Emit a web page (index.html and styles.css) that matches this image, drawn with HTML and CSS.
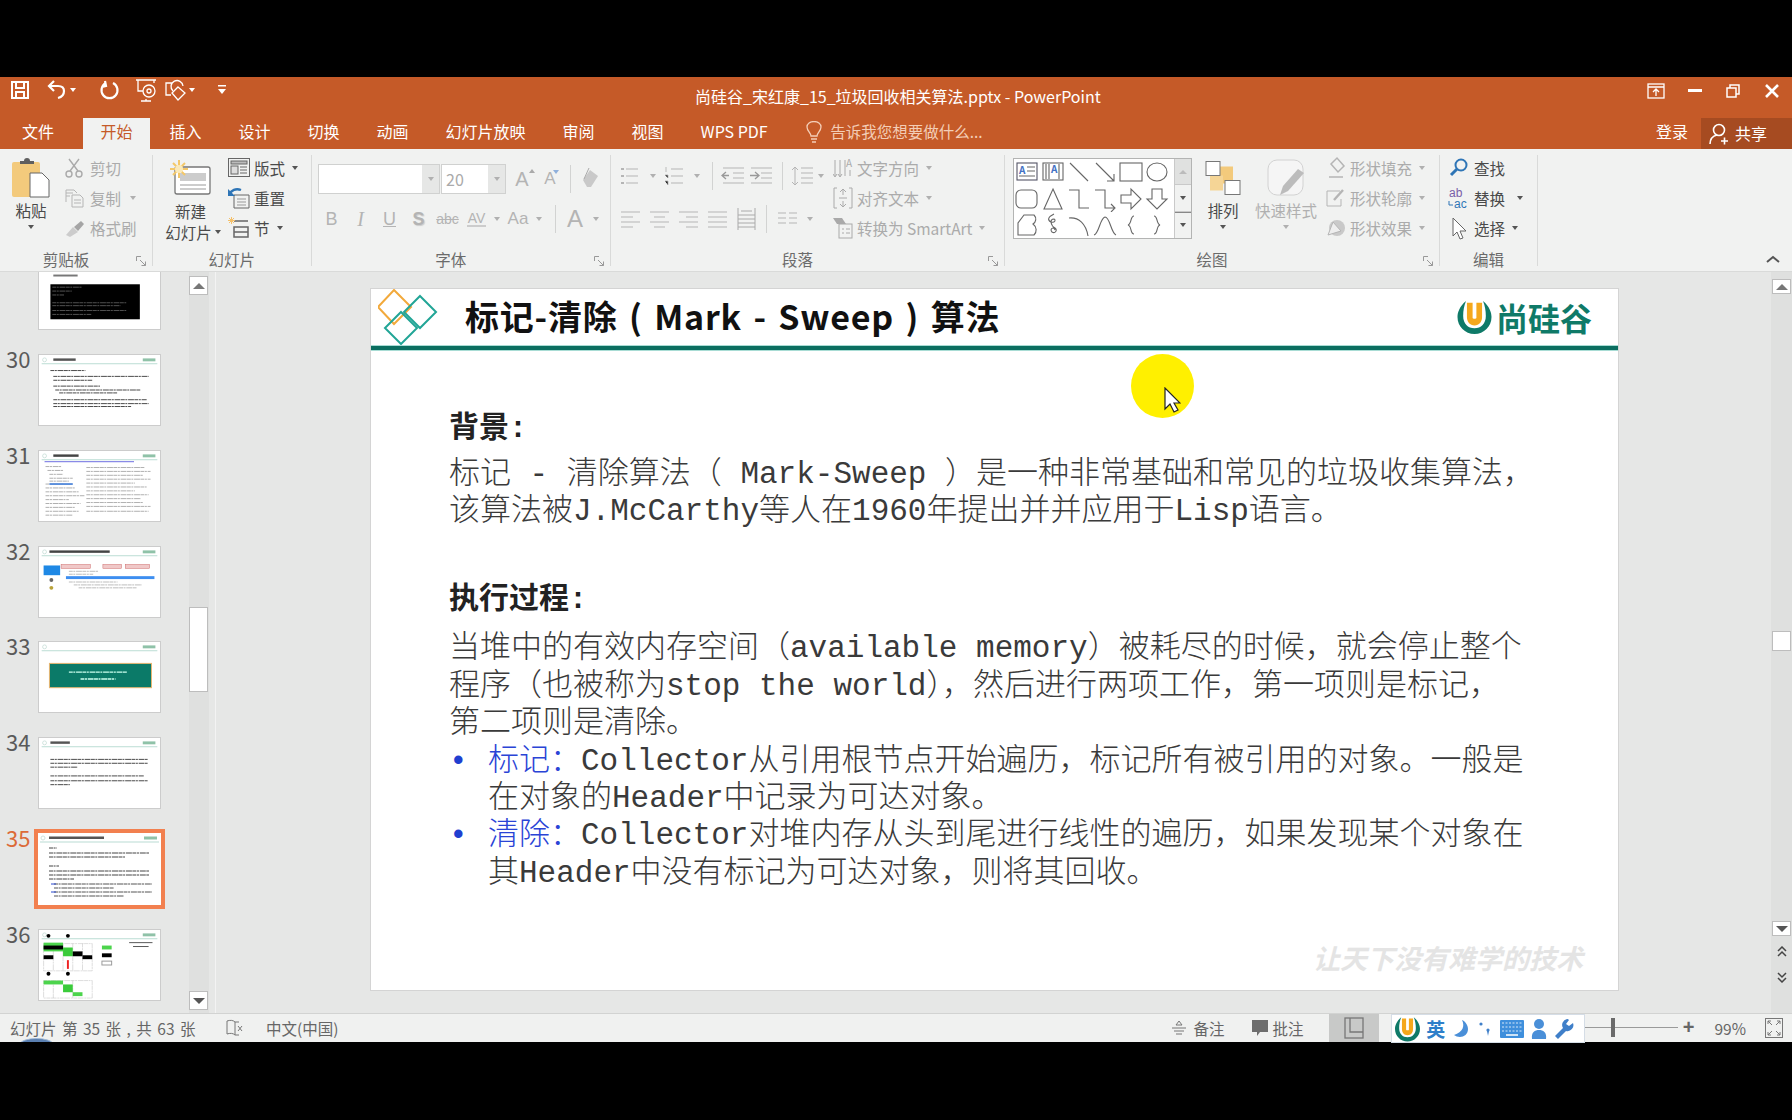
FILE: index.html
```html
<!DOCTYPE html>
<html>

<head>
    <meta charset="UTF-8" />
    <title>尚硅谷_宋红康_15_垃圾回收相关算法.pptx - PowerPoint</title>
    <link rel="stylesheet" href="styles.css">
</head>

<body>
    <svg class="defs" width="0" height="0">
        <symbol id="ulogo" viewBox="0 0 36 36">
            <path d="M9 1C2 7 0 13 0 18c0 10 8 18 18 18s18-8 18-18c0-5-2-11-9-17 2 5 3 10 3 16 0 8-5 13-12 13S6 25 6 17C6 11 7 6 9 1z" fill="#0f7a68" />
            <path d="M10 3h16v15c0 5-3 9-8 9s-8-4-8-9z" fill="#f5a81c" />
            <path d="M16 1h4v18c0 1-4 1-4 0z" fill="#fff" />
        </symbol>
        <symbol id="thead" viewBox="0 0 123 72">
            <rect x="2" y="8.500" width="119" height="1" fill="#b9dcd3" />
            <circle cx="5" cy="5" r="2" fill="none" stroke="#cfe3dd" />
            <rect x="106" y="3.500" width="13" height="3" fill="#8fc2a8" />
        </symbol>
        <symbol id="launch" viewBox="0 0 10 10">
            <path d="M.5 5V.5H5M9.500 9.500L4 4M9.500 5.500v4h-4" fill="none" stroke="#999" />
        </symbol>
    </svg>

    <div class="bar-black top"></div>

    <div class="titlebar">
        <div class="qat">
            <svg class="q-save" width="22" height="22" viewBox="0 0 22 22" fill="none" stroke="#fff" stroke-width="2"><path d="M3 3h16v16H3zM7 3v6h8V3M7 19v-6h8v6" /></svg>
            <svg class="q-undo" width="22" height="22" viewBox="0 0 22 22" fill="none" stroke="#fff" stroke-width="2.200"><path d="M8 2L3 7l5 5M3 7h9c4 0 6 2 6 5s-2 6-6 7" /></svg>
            <i class="caret white"></i>
            <svg class="q-redo" width="22" height="22" viewBox="0 0 22 22" fill="none" stroke="#fff" stroke-width="2.200"><path d="M14 4a8 8 0 1 1-7 0M6 2l1 5-4 1" /></svg>
            <svg class="q-show" width="22" height="24" viewBox="0 0 22 24" fill="none" stroke="#fff" stroke-width="1.300"><path d="M1 2h20M3 2v11h5M19 2v3M11 21v2M6 23h10" /><circle cx="14" cy="13" r="6" /><circle cx="14" cy="13" r="2" /></svg>
            <svg class="q-shape" width="22" height="22" viewBox="0 0 22 22" fill="none" stroke="#fff" stroke-width="1.300"><path d="M7 4H1v12h5M8 12a6 6 0 1 1 10-5" /><path d="M13 8l7 6-7 7-6-7z" /></svg>
            <i class="caret white"></i>
            <svg class="q-more" width="10" height="12" viewBox="0 0 10 12" fill="#fff"><rect x="1" y="1" width="8" height="1.500" /><path d="M1 5h8L5 10z" /></svg>
        </div>
        <div class="doc-title">尚硅谷_宋红康_15_垃圾回收相关算法.pptx - PowerPoint</div>
        <div class="winctl">
            <span><svg width="18" height="16" viewBox="0 0 18 16" fill="none" stroke="#fff" stroke-width="1.300"><rect x="1" y="1" width="16" height="14" /><path d="M1 4h16M9 13V7M6 9l3-3 3 3" /></svg></span>
            <span><svg width="14" height="4" viewBox="0 0 14 4"><rect width="14" height="3" fill="#fff" /></svg></span>
            <span><svg width="14" height="14" viewBox="0 0 14 14" fill="none" stroke="#fff" stroke-width="1.500"><rect x="1" y="4" width="9" height="9" /><path d="M4 4V1h9v9h-3" /></svg></span>
            <span><svg width="14" height="14" viewBox="0 0 14 14" stroke="#fff" stroke-width="2.600"><path d="M1 1l12 12M13 1L1 13" /></svg></span>
        </div>
    </div>

    <div class="tabs">
        <a class="tab first">文件</a>
        <a class="tab active">开始</a>
        <a class="tab">插入</a>
        <a class="tab">设计</a>
        <a class="tab">切换</a>
        <a class="tab">动画</a>
        <a class="tab">幻灯片放映</a>
        <a class="tab">审阅</a>
        <a class="tab">视图</a>
        <a class="tab">WPS PDF</a>
        <div class="tell">
            <svg width="16" height="22" viewBox="0 0 16 22" fill="none" stroke="#f3cdb6" stroke-width="1.300"><path d="M5 15c0-3-4-5-4-9a7 5.500 0 0 1 14 0c0 4-4 6-4 9zM5 18h6M6 21h4" /></svg>
            <span>告诉我您想要做什么...</span>
        </div>
        <div class="account">
            <span class="login">登录</span>
            <div class="share">
                <svg width="20" height="24" viewBox="0 0 20 24" fill="none" stroke="#fff" stroke-width="1.600"><circle cx="10" cy="8" r="5.500" /><path d="M1 22c0-5 3-8 7-9M12 19h7M15.500 15.500v7" /></svg>
                <span>共享</span>
            </div>
        </div>
    </div>

    <div class="ribbon">
        <!-- 剪贴板 -->
        <div class="group g-clip">
            <div class="body">
                <div class="big w62">
                    <svg width="38" height="40" viewBox="0 0 38 40">
                        <rect y="4" width="28" height="35" rx="2" fill="#f3ca7c" />
                        <path d="M8 6V3h4a3 3 0 0 1 6 0h4v3z" fill="#5f5f5f" />
                        <path d="M18 15h12l7 7v17H18z" fill="#fff" stroke="#666" />
                    </svg>
                    <span class="lbl dark">粘贴</span>
                    <i class="caret dk"></i>
                </div>
                <div class="stack">
                    <div class="tool"><svg width="24" height="20" viewBox="0 0 24 20" fill="none" stroke="#aaa" stroke-width="1.400"><circle cx="7" cy="16" r="3" /><circle cx="17" cy="16" r="3" /><path d="M8 13L17 1M16 13L7 1" /></svg><span>剪切</span></div>
                    <div class="tool"><svg width="24" height="20" viewBox="0 0 24 20" fill="none" stroke="#b5b5b5"><path d="M4 14V2h8l3 3M4 5h7M4 8h4" /><path d="M10 7h8l3 3v9H10zM12 12h7M12 15h7" /></svg><span>复制</span><i class="caret w16"></i></div>
                    <div class="tool"><svg width="24" height="20" viewBox="0 0 24 20"><path d="M4 17l7-8 5 5-8 5z" fill="#ccc" /><path d="M12 9l7-6 3 3-6 7z" fill="#a5a5a5" /></svg><span>格式刷</span></div>
                </div>
            </div>
            <div class="label">剪贴板</div>
            <svg class="launcher" width="10" height="10"><use href="#launch" /></svg>
        </div>

        <!-- 幻灯片 -->
        <div class="group g-slide">
            <div class="body">
                <div class="big w75">
                    <svg width="42" height="36" viewBox="0 0 42 36">
                        <rect x="5" y="7" width="35" height="27" rx="2" fill="#fff" stroke="#777" stroke-width="1.300" />
                        <rect x="10" y="13" width="26" height="8" fill="#ccc" />
                        <path d="M10 25h26M10 29h26" stroke="#999" />
                        <path d="M9 0v18M0 9h18M3 3l12 12M15 3L3 15" stroke="#f4c86a" stroke-width="2" />
                        <circle cx="9" cy="9" r="4" fill="#fbe9b8" />
                    </svg>
                    <span class="lbl dark two">新建</span>
                    <span class="lbl dark row">幻灯片<i class="caret dk w12"></i></span>
                </div>
                <div class="stack dark">
                    <div class="tool"><svg width="22" height="20" viewBox="0 0 22 20" fill="none" stroke="#666"><rect x=".5" y=".5" width="21" height="18" /><rect x="3" y="3" width="16" height="3" fill="#bbb" /><rect x="3" y="8" width="7" height="8" fill="#ddd" /><path d="M12 9h7M12 12h7M12 15h7" /></svg><span>版式</span><i class="caret dk"></i></div>
                    <div class="tool"><svg width="22" height="22" viewBox="0 0 22 22" fill="none"><path d="M6 8h15v13H6z" stroke="#666" /><path d="M9 12h9M9 15h9M9 18h9" stroke="#999" /><path d="M1 8C3 3 8 1 13 3" stroke="#2e75b6" stroke-width="2.400" /><path d="M0 2v7h7z" fill="#2e75b6" /></svg><span>重置</span></div>
                    <div class="tool"><svg width="22" height="22" viewBox="0 0 22 22" fill="none"><path d="M6 4h14M6 10h14v10H6zM6 15h14" stroke="#666" stroke-width="1.500" /><path d="M1 1l5 5M6 1L1 6M3.500 0v7M0 3.500h7" stroke="#f4c06a" /></svg><span>节</span><i class="caret dk"></i></div>
                </div>
            </div>
            <div class="label plain">幻灯片</div>
        </div>

        <!-- 字体 -->
        <div class="group g-font">
            <div class="font-row one">
                <div class="combo c-name"><i class="caret"></i></div>
                <div class="combo c-size"><span>20</span><i class="caret"></i></div>
                <span class="fx w32">A<sup class="up"></sup></span>
                <span class="fx w24 small">A<sup class="down"></sup></span>
                <i class="vsep s1"></i>
                <svg width="36" height="26" viewBox="0 0 36 26"><path d="M12 14l7-10 8 6-7 11h-4z" fill="#c9c9c9" /><path d="M13 13l5-11" stroke="#aaa" fill="none" /></svg>
            </div>
            <div class="font-row two">
                <b class="fmt">B</b>
                <i class="fmt ital">I</i>
                <u class="fmt">U</u>
                <span class="fmt shadow">S</span>
                <s class="fmt tiny">abc</s>
                <span class="fmt av">AV</span>
                <i class="caret w12"></i>
                <span class="fmt aa">Aa</span>
                <i class="caret w12"></i>
                <i class="vsep s2"></i>
                <span class="fx w30 mid">A</span>
                <i class="caret w12"></i>
            </div>
            <div class="label">字体</div>
            <svg class="launcher" width="10" height="10"><use href="#launch" /></svg>
        </div>

        <!-- 段落 -->
        <div class="group g-para">
            <div class="body">
                <div class="para-left">
                    <div class="para-row one">
                        <svg width="24" height="22" viewBox="0 0 24 22" stroke="#b5b5b5"><path d="M7 4h12M7 11h12M7 18h12" /><path d="M2 4h3M2 11h3M2 18h3" stroke-width="2" /></svg>
                        <i class="caret w20"></i>
                        <svg width="24" height="22" viewBox="0 0 24 22" stroke="#b5b5b5"><path d="M8 4h12M8 11h12M8 18h12" /><path d="M3 2v5M2 10h3v3M2 16h3v4" stroke-width=".9" /></svg>
                        <i class="caret w20"></i>
                        <i class="vsep s3"></i>
                        <svg width="30" height="22" viewBox="0 0 30 22" stroke="#b5b5b5" fill="none"><path d="M5 3h21M15 8h11M15 13h11M5 18h21" /><path d="M11 10.500H4M8 7l-4 3.500L8 14" stroke="#999" stroke-width="1.300" /></svg>
                        <svg width="28" height="22" viewBox="0 0 28 22" stroke="#b5b5b5" fill="none"><path d="M3 3h21M13 8h11M13 13h11M3 18h21" /><path d="M2 10.500h8M7 7l4 3.500L7 14" stroke="#999" stroke-width="1.300" /></svg>
                        <i class="vsep s4"></i>
                        <svg width="30" height="24" viewBox="0 0 30 24" stroke="#b5b5b5" fill="none"><path d="M13 4h12M13 9h12M13 14h12M13 19h12M7 3v18M4 6l3-3 3 3M4 18l3 3 3-3" /></svg>
                        <i class="caret w6"></i>
                    </div>
                    <div class="para-row two">
                        <svg width="29" height="22" viewBox="0 0 29 22" stroke="#b5b5b5"><path d="M5 4h19M5 9h12M5 14h19M5 19h12" /></svg>
                        <svg width="29" height="22" viewBox="0 0 29 22" stroke="#b5b5b5"><path d="M5 4h19M9 9h11M5 14h19M9 19h11" /></svg>
                        <svg width="29" height="22" viewBox="0 0 29 22" stroke="#b5b5b5"><path d="M5 4h19M12 9h12M5 14h19M12 19h12" /></svg>
                        <svg width="29" height="22" viewBox="0 0 29 22" stroke="#b5b5b5"><path d="M5 4h19M5 9h19M5 14h19M5 19h19" /></svg>
                        <svg width="29" height="24" viewBox="0 0 29 24" stroke="#aaa" fill="none"><path d="M6 1v22M23 1v22M6 8h17M6 12h17M6 16h17M6 20h17M9 4h11" /></svg>
                        <i class="vsep s5"></i>
                        <svg width="32" height="22" viewBox="0 0 32 22" stroke="#b5b5b5"><path d="M7 5h8M18 5h8M7 10h8M18 10h8M7 15h8M18 15h8" /></svg>
                        <i class="caret w14"></i>
                    </div>
                </div>
                <div class="stack">
                    <div class="tool"><svg width="20" height="24" viewBox="0 0 20 24" fill="none" stroke="#aaa"><path d="M2 4v16M7 4v16M12 4v16M0 18l2 3 2-3M5 18l2 3 2-3" /><text x="13" y="11" font-size="10" fill="#aaa" stroke="none">A</text><path d="M17 14v6" /></svg><span>文字方向</span><i class="caret"></i></div>
                    <div class="tool"><svg width="20" height="24" viewBox="0 0 20 24" fill="none" stroke="#aaa"><path d="M4 2H1v20h3M16 2h3v20h-3M10 3v6M7 6l3-3 3 3M10 21v-6M7 18l3 3 3-3M6 12h8" /></svg><span>对齐文本</span><i class="caret"></i></div>
                    <div class="tool"><svg width="20" height="24" viewBox="0 0 20 24" fill="none"><path d="M0 2h9l4 6H4z" fill="#a9a9a9" /><rect x="6" y="8" width="13" height="14" stroke="#aaa" /><path d="M9 13h2M13 13h4M9 17h2M13 17h4" stroke="#aaa" /></svg><span>转换为 SmartArt</span><i class="caret"></i></div>
                </div>
            </div>
            <div class="label">段落</div>
            <svg class="launcher" width="10" height="10"><use href="#launch" /></svg>
        </div>

        <!-- 绘图 -->
        <div class="group g-draw">
            <div class="body">
                <div class="gallery">
                    <div class="shapes">
                        <svg viewBox="0 0 26 26"><rect x="3" y="4" width="20" height="17" stroke="#556" /><text x="5" y="15" font-size="10" font-weight="700" fill="#4472c4" stroke="none">A</text><path d="M13 8h8M13 12h8M5 17h16" /></svg>
                        <svg viewBox="0 0 26 26"><rect x="3" y="4" width="20" height="17" /><text x="11" y="14" font-size="10" font-weight="700" fill="#4472c4" stroke="none">A</text><path d="M6 5v15M9 5v15M19 5v15" /></svg>
                        <svg viewBox="0 0 26 26"><path d="M4 4l18 18" /></svg>
                        <svg viewBox="0 0 26 26"><path d="M4 4l18 18M22 15v7h-7" /></svg>
                        <svg viewBox="0 0 26 26"><rect x="2" y="4" width="22" height="18" /></svg>
                        <svg viewBox="0 0 26 26"><ellipse cx="13" cy="13" rx="10" ry="9" /></svg>
                        <svg viewBox="0 0 26 26"><rect x="2" y="4" width="21" height="18" rx="5" /></svg>
                        <svg viewBox="0 0 26 26"><path d="M13 3l9 20H4z" /></svg>
                        <svg viewBox="0 0 26 26"><path d="M3 4h10v18h10" /></svg>
                        <svg viewBox="0 0 26 26"><path d="M3 4h10v18h9M19 18l4 4-4 4" /></svg>
                        <svg viewBox="0 0 26 26"><path d="M3 9h10V3l10 10-10 10v-6H3z" /></svg>
                        <svg viewBox="0 0 26 26"><path d="M8 3h10v10h5L13 23 3 13h5z" /></svg>
                        <svg viewBox="0 0 26 26"><path d="M4 23V11l6-8h10c3 3 2 7-1 9 4 3 4 8 1 11z" /></svg>
                        <svg viewBox="0 0 26 26"><path d="M14 2c-6 3-7 6-3 8 4 1 5-2 3-3-5 0-3 7 1 9 3 2 0 6-3 4-3-3 2-6 3-2" /></svg>
                        <svg viewBox="0 0 26 26"><path d="M3 6c10-1 17 6 19 18" /></svg>
                        <svg viewBox="0 0 26 26"><path d="M2 23c5-1 6-17 11-18 5 0 6 16 11 18" /></svg>
                        <svg viewBox="0 0 26 26"><path d="M16 4c-4 0-2 8-6 9 4 1 2 9 6 9" /></svg>
                        <svg viewBox="0 0 26 26"><path d="M10 4c4 0 2 8 6 9-4 1-2 9-6 9" /></svg>
                    </div>
                    <div class="gal-scroll">
                        <span class="off"><i class="tri up"></i></span>
                        <span><i class="caret dk"></i></span>
                        <span class="more"><i class="caret dk"></i></span>
                    </div>
                </div>
                <div class="big w40 ml11">
                    <svg width="36" height="35" viewBox="0 0 36 35">
                        <rect x="11" y="6" width="17" height="17" fill="#f3ca7c" />
                        <rect x="5" y="15" width="13" height="15" fill="#f5d596" />
                        <rect x="1" y="1" width="14" height="14" fill="#fff" stroke="#777" />
                        <rect x="20" y="20" width="15" height="14" fill="#fff" stroke="#777" />
                    </svg>
                    <span class="lbl dark">排列</span>
                    <i class="caret dk"></i>
                </div>
                <div class="big w64 ml11">
                    <svg width="40" height="38" viewBox="0 0 40 38">
                        <rect x="2" y="1" width="35" height="35" rx="9" fill="#f5f5f5" stroke="#d2d2d2" />
                        <path d="M38 14L22 32l-8 4 3-9 15-17z" fill="#bcbcbc" />
                    </svg>
                    <span class="lbl">快速样式</span>
                    <i class="caret"></i>
                </div>
                <div class="stack ml8">
                    <div class="tool"><svg width="20" height="24" viewBox="0 0 20 24" fill="none" stroke="#b5b5b5"><path d="M5 8l6-6 7 8-6 6zM3 21h14" stroke-width="1.500" /></svg><span>形状填充</span><i class="caret"></i></div>
                    <div class="tool"><svg width="20" height="24" viewBox="0 0 20 24" fill="none" stroke="#b5b5b5"><path d="M14 5H1v15h14v-7" /><path d="M8 14l9-10" stroke-width="2.400" /></svg><span>形状轮廓</span><i class="caret"></i></div>
                    <div class="tool"><svg width="20" height="24" viewBox="0 0 20 24"><circle cx="11" cy="12" r="8" fill="#c9c9c9" /><path d="M2 19l5-13 8 9z" fill="#eee" stroke="#b5b5b5" /></svg><span>形状效果</span><i class="caret"></i></div>
                </div>
            </div>
            <div class="label">绘图</div>
            <svg class="launcher" width="10" height="10"><use href="#launch" /></svg>
        </div>

        <!-- 编辑 -->
        <div class="group g-edit">
            <div class="body">
                <div class="stack dark">
                    <div class="tool"><svg width="22" height="20" viewBox="0 0 22 20" fill="none"><circle cx="13" cy="7" r="5.500" stroke="#2e75b6" stroke-width="2" /><path d="M9 11l-6 6" stroke="#2e75b6" stroke-width="3" /></svg><span>查找</span></div>
                    <div class="tool"><svg width="22" height="24" viewBox="0 0 22 24"><text x="1" y="11" font-size="12" font-family="Liberation Sans" fill="#7a5fa8">ab</text><text x="6" y="22" font-size="12" font-family="Liberation Sans" fill="#2e75b6">ac</text><path d="M1 15v4h4" fill="none" stroke="#2e75b6" /></svg><span>替换</span><i class="caret dk w22"></i></div>
                    <div class="tool"><svg width="22" height="24" viewBox="0 0 22 24"><path d="M5 2v18l4-4 3 7 3-1-3-7h6z" fill="#fff" stroke="#666" /></svg><span>选择</span><i class="caret dk"></i></div>
                </div>
            </div>
            <div class="label plain">编辑</div>
        </div>

        <div class="ribbon-end">
            <svg width="14" height="8" viewBox="0 0 14 8" fill="none" stroke="#555" stroke-width="2"><path d="M1 7l6-5 6 5" /></svg>
        </div>
    </div>

    <div class="main">
        <!-- 缩略图 -->
        <div class="pane">
            <div class="thumbs">
                <div class="trow">
                    <span class="num"></span>
                    <svg class="thumb" viewBox="0 0 123 72"><rect x="14" y="16" width="25" height="2" fill="#777" /><rect x="11" y="26" width="92" height="36" fill="#000" /><g stroke="#777" stroke-width=".7"><path d="M13 29h30M13 33h20M13 37h12M13 45h76M13 48h70M13 53h76M13 57h40" /></g></svg>
                </div>
                <div class="trow">
                    <span class="num">30</span>
                    <svg class="thumb" viewBox="0 0 123 72"><use href="#thead" width="123" height="72" /><rect x="14" y="3.500" width="23" height="2.500" fill="#555" /><g stroke="#444"><path d="M11 16h36M14 22h98M14 26h40M14 32h48M16 36h88M20 39h60M14 46h96M14 50h98M14 53h80" /></g></svg>
                </div>
                <div class="trow">
                    <span class="num">31</span>
                    <svg class="thumb" viewBox="0 0 123 72"><use href="#thead" width="123" height="72" /><rect x="14" y="3.500" width="26" height="2.500" fill="#444" /><path d="M5 11h92" stroke="#6a6ae0" /><g stroke="#999" stroke-width=".8"><path d="M6 16h16M8 20h16M10 24h14M10 28h24M10 31h20M6 34h18M6 38h30M6 42h34M6 46h40M6 50h24M6 54h36M6 58h30M6 62h34M6 66h28M48 17h60M48 21h66M48 25h58M48 29h66M48 33h50M48 37h62M48 41h50M48 45h64M48 49h56M48 53h58M48 57h66M48 62h64" /></g><path d="M10 34h24" stroke="#5b8fdc" stroke-width="2" /></svg>
                </div>
                <div class="trow">
                    <span class="num">32</span>
                    <svg class="thumb" viewBox="0 0 123 72"><use href="#thead" width="123" height="72" /><rect x="10" y="3.500" width="62" height="2.500" fill="#444" /><rect x="4" y="19" width="17" height="10" fill="#1e88e5" /><rect x="22" y="18" width="30" height="4" fill="#f0c8c8" stroke="#c66" stroke-width=".5" /><rect x="65" y="18" width="19" height="4" fill="#f0c8c8" stroke="#c66" stroke-width=".5" /><rect x="88" y="18" width="25" height="4" fill="#f0c8c8" stroke="#c66" stroke-width=".5" /><rect x="27" y="30" width="91" height="3" fill="#3d8ef0" /><g stroke="#aaa" stroke-width=".8"><path d="M30 25h30M30 28h25M30 36h50M35 39h70M40 42h60" /></g><circle cx="12" cy="34" r="2" fill="#666" /><circle cx="12" cy="42" r="2" fill="#b9a23a" /></svg>
                </div>
                <div class="trow">
                    <span class="num">33</span>
                    <svg class="thumb" viewBox="0 0 123 72"><use href="#thead" width="123" height="72" /><rect x="10" y="22" width="105" height="25" fill="#0b7a68" stroke="#eab56f" /><g stroke="#cfe" stroke-width="1.500"><path d="M30 31h60M42 38h36" /></g></svg>
                </div>
                <div class="trow">
                    <span class="num">34</span>
                    <svg class="thumb" viewBox="0 0 123 72"><use href="#thead" width="123" height="72" /><rect x="11" y="3.500" width="20" height="2.500" fill="#555" /><g stroke="#444"><path d="M11 22h100M11 26h100M11 30h28M11 39h96M11 44h100M11 48h20" /></g></svg>
                </div>
                <div class="trow current">
                    <span class="num">35</span>
                    <svg class="thumb" viewBox="0 0 123 72"><use href="#thead" width="123" height="72" /><rect x="11" y="3.500" width="55" height="2.500" fill="#555" /><g stroke="#444"><path d="M11 15h8M11 20h100M11 24h76M11 33h10M11 38h100M11 42h100M11 46h25" /></g><g stroke="#555"><path d="M16 51h98M16 55h60M16 59h98M16 63h70" /></g><path d="M13 51h5M13 59h5" stroke="#2a4ad0" /></svg>
                </div>
                <div class="trow">
                    <span class="num">36</span>
                    <svg class="thumb" viewBox="0 0 123 72"><use href="#thead" width="123" height="72" /><g fill="none" stroke="#bbb" stroke-width=".5"><path d="M4 14h50v28H4zM4 52h50v18H4zM14 14v28M24 14v28M34 14v28M44 14v28M14 52v18M34 52v18" /></g><rect x="4" y="13" width="20" height="9" fill="#4cd44c" /><rect x="4" y="16" width="20" height="4" fill="#000" /><rect x="24" y="18" width="10" height="9" fill="#3acb3a" /><rect x="34" y="22" width="10" height="5" fill="#000" /><rect x="44" y="26" width="10" height="4" fill="#000" /><rect x="4" y="26" width="10" height="4" fill="#000" /><rect x="4" y="52" width="20" height="4" fill="#4cd44c" /><rect x="24" y="56" width="10" height="8" fill="#3acb3a" /><rect x="34" y="64" width="10" height="4" fill="#4cd44c" /><circle cx="9" cy="6" r="2" /><circle cx="29" cy="6" r="2" /><circle cx="9" cy="45" r="2" /><circle cx="29" cy="45" r="2" /><path d="M29 31v9" stroke="#e22" stroke-width="2" /><rect x="64" y="16" width="10" height="4" fill="#4cd44c" /><rect x="64" y="24" width="10" height="4" fill="#000" /><rect x="64" y="32" width="10" height="4" fill="#fff" stroke="#999" /><path d="M92 13h24M96 17h16" stroke="#555" /></svg>
                </div>
            </div>
        </div>
        <div class="pane-scroll">
            <span class="sb-btn"><i class="tri up"></i></span>
            <span class="sb-thumb"></span>
            <span class="sb-btn end"><i class="caret dk big-caret"></i></span>
        </div>

        <!-- 幻灯片编辑区 -->
        <div class="editor">
            <div class="slide">
                <div class="slide-head">
                    <svg class="diamonds" width="60" height="56" viewBox="0 0 60 56" fill="none" stroke-width="2">
                        <path d="M16 1l17 17-17 17L0 18z" stroke="#f2a93b" />
                        <path d="M42 7l16 16-16 16-16-16z" stroke="#21a596" />
                        <path d="M23 23l16 16-16 16L7 39z" stroke="#21a596" />
                    </svg>
                    <h1>标记-清除 ( Mark - Sweep ) 算法</h1>
                    <div class="brand">
                        <svg width="35" height="34"><use href="#ulogo" /></svg>
                        <span>尚硅谷</span>
                    </div>
                </div>
                <div class="slide-rule"></div>
                <div class="slide-body">
                    <h2 class="h-first">背景:</h2>
                    <p>标记 - 清除算法（ Mark-Sweep ）是一种非常基础和常见的垃圾收集算法，<br>该算法被J.McCarthy等人在1960年提出并并应用于Lisp语言。</p>
                    <h2 class="h-second">执行过程:</h2>
                    <p>当堆中的有效内存空间（available memory）被耗尽的时候，就会停止整个<br>程序（也被称为stop the world），然后进行两项工作，第一项则是标记，<br>第二项则是清除。</p>
                    <ul>
                        <li><span class="dot">•</span><div><em>标记：</em>Collector从引用根节点开始遍历，标记所有被引用的对象。一般是<br>在对象的Header中记录为可达对象。</div></li>
                        <li><span class="dot">•</span><div><em>清除：</em>Collector对堆内存从头到尾进行线性的遍历，如果发现某个对象在<br>其Header中没有标记为可达对象，则将其回收。</div></li>
                    </ul>
                </div>
                <div class="watermark">让天下没有难学的技术</div>
                <div class="pointer">
                    <svg width="17" height="26" viewBox="0 0 17 26"><path d="M1 1v21l5-5 4 8 4-2-4-7h6z" fill="#fff" stroke="#222" stroke-width="1.200" /></svg>
                </div>
            </div>
        </div>
        <div class="edit-scroll">
            <span class="sb-btn"><i class="tri up"></i></span>
            <span class="sb-thumb2"></span>
            <span class="sb-btn"><i class="caret dk big-caret"></i></span>
            <svg class="nav-a" width="12" height="12" viewBox="0 0 12 12" fill="none" stroke="#444" stroke-width="1.500"><path d="M2 5l4-4 4 4M2 10l4-4 4 4" /></svg>
            <svg class="nav-b" width="12" height="12" viewBox="0 0 12 12" fill="none" stroke="#444" stroke-width="1.500"><path d="M2 2l4 4 4-4M2 7l4 4 4-4" /></svg>
        </div>
    </div>

    <div class="status">
        <span class="arc"></span>
        <span class="st-count">幻灯片 第 35 张 , 共 63 张</span>
        <svg width="18" height="18" viewBox="0 0 18 18" fill="none" stroke="#777"><path d="M9 3C7 1 4 1 1 2v13c3-1 6-1 8 1V3M9 3h4M9 16h4M12 7l4 5M16 7l-4 5" /></svg>
        <span class="st-lang">中文(中国)</span>
        <div class="st-right">
            <svg class="i-note" width="16" height="18" viewBox="0 0 16 18" fill="none" stroke="#777"><path d="M8 2L5 6h6zM1 9h14M3 12h10M5 15h6" /></svg>
            <span class="st-txt">备注</span>
            <svg class="i-comment" width="18" height="18" viewBox="0 0 18 18"><path d="M1 1h16v12H9l-3 4v-4H1z" fill="#6d6d6d" /></svg>
            <span class="st-txt">批注</span>
            <span class="st-view"><svg width="20" height="22" viewBox="0 0 20 22" fill="none" stroke="#777" stroke-width="1.300"><rect x="1" y="1" width="18" height="20" /><path d="M6 1v14h13" /></svg></span>
            <div class="ime">
                <svg width="25" height="28"><use href="#ulogo" /></svg>
                <b>英</b>
                <svg width="18" height="20" viewBox="0 0 18 20"><path d="M10 1c3 6 1 12-8 15 5 4 14 2 14-6 0-4-3-8-6-9z" fill="#4a8fd8" /></svg>
                <svg width="16" height="20" viewBox="0 0 16 20" fill="#3f7fc9"><circle cx="4" cy="5" r="1.600" /><circle cx="11" cy="11" r="1.600" /><path d="M10 12h2l-1 5z" /></svg>
                <svg width="24" height="18" viewBox="0 0 24 18"><rect width="24" height="18" rx="1" fill="#3f8fdc" /><path d="M2 3h20M2 7h20M2 11h20" stroke="#d5e7f8" stroke-dasharray="2 1.500" /><path d="M6 15h12" stroke="#fff" stroke-width="1.500" /></svg>
                <svg width="16" height="22" viewBox="0 0 16 22" fill="#4a8fd8"><circle cx="8" cy="6" r="5" /><path d="M1 21c-1-7 3-9 7-9s8 2 7 9z" /></svg>
                <svg width="20" height="22" viewBox="0 0 20 22" fill="#3f7fc9"><path d="M13 1a6 6 0 0 0-4 9L1 18l3 3 8-8a6 6 0 0 0 7-8l-4 3-3-2 3-4c-1-1-1-1-2-1z" /></svg>
            </div>
            <div class="zoom-slider"><i></i></div>
            <span class="zoom-plus">+</span>
            <span class="st-txt zoom-val">99%</span>
            <svg class="i-fit" width="18" height="20" viewBox="0 0 18 20" fill="none" stroke="#777"><rect x=".5" y=".5" width="17" height="19" /><path d="M3 3l4 4M3 3h3M3 3v3M15 3l-4 4M15 3h-3M15 3v3M3 17l4-4M3 17h3M3 17v-3M15 17l-4-4M15 17h-3M15 17v-3" /></svg>
        </div>
    </div>

    <div class="bar-black bottom"></div>
</body>

</html>
```

FILE: styles.css
```css
* {
    margin: 0;
    padding: 0;
    box-sizing: border-box;
}

body {
    width: 1792px;
    height: 1120px;
    overflow: hidden;
    background: #000;
    font-family: "Noto Sans CJK SC", "Noto Sans", sans-serif;
}

.defs {
    display: block;
}

.bar-black.top {
    height: 77px;
}

/* 标题栏 */

.titlebar {
    height: 41px;
    display: flex;
    background: #c55a28;
    color: #fff;
}

.qat {
    width: 695px;
    display: flex;
    align-items: center;
    height: 26px;
}

.q-save { margin-left: 9px; }
.q-undo { margin-left: 15px; }
.qat .caret { width: 8px; margin-left: 1px; }
.q-redo { margin-left: 22px; }
.q-show { margin-left: 14px; }
.q-shape { margin-left: 8px; }
.q-more { margin-left: 21px; }

.doc-title {
    padding-top: 7px;
    font-size: 16px;
    line-height: 24px;
    white-space: nowrap;
}

.winctl {
    margin-left: auto;
    display: flex;
    height: 28px;
    padding-right: 1px;
}

.winctl span {
    width: 38.500px;
    display: flex;
    align-items: center;
    justify-content: center;
}

/* 选项卡 */

.tabs {
    height: 31px;
    display: flex;
    gap: 2px;
    background: #c55a28;
    color: #fff;
    font-size: 16px;
    line-height: 27px;
}

.tab {
    padding: 0 17.500px;
    white-space: nowrap;
}

.tab.first {
    width: 81px;
    padding-left: 22px;
}

.tab.active {
    width: 67px;
    background: #f1f2f1;
    color: #c55a28;
}

.tell {
    display: flex;
    align-items: center;
    height: 27px;
    margin-left: 19px;
    gap: 8px;
    color: #f3cdb6;
    font-size: 15.500px;
}

.account {
    margin-left: auto;
    display: flex;
}

.login {
    padding-right: 13px;
}

.share {
    width: 91px;
    display: flex;
    align-items: center;
    gap: 6px;
    padding-left: 8px;
    background: #a64b21;
}

/* 功能区 */

.ribbon {
    height: 123px;
    display: flex;
    padding-top: 6px;
    background: #f1f2f1;
    border-bottom: 1px solid #d9dad9;
}

.group {
    position: relative;
    height: 111px;
    display: flex;
    flex-direction: column;
    border-right: 1px solid #d9dad9;
    flex: none;
}

.g-clip { width: 153px; }
.g-slide { width: 158.500px; }
.g-font { width: 299.500px; }
.g-para { width: 394px; }
.g-draw { width: 435px; }
.g-edit { width: 98px; }

.body {
    display: flex;
    flex: 1;
    min-height: 0;
    margin-top: -2px;
}

.label {
    height: 14px;
    margin-top: auto;
    padding-right: 20px;
    line-height: 14px;
    text-align: center;
    font-size: 15.500px;
    color: #6b6b6b;
}

.label.plain {
    padding-right: 0;
}

.launcher {
    position: absolute;
    right: 6px;
    bottom: 0;
}

.big {
    display: flex;
    flex-direction: column;
    align-items: center;
    flex: none;
    padding-top: 5px;
    font-size: 15.500px;
}

.w62 { width: 62px; }
.w75 { width: 75px; }
.w40 { width: 40px; }
.w64 { width: 64px; }
.ml11 { margin-left: 11px; }
.ml8 { margin-left: 8px; }

.big svg {
    height: 40px;
    flex: none;
}

.lbl {
    margin-top: 1px;
    line-height: 22px;
    color: #b0b0b0;
    white-space: nowrap;
}

.lbl.dark {
    color: #4a4a4a;
}

.lbl.two {
    margin-top: 3px;
    line-height: 20px;
}

.lbl.row {
    display: flex;
    align-items: center;
    line-height: 20px;
    margin-left: 8px;
}

.big > .caret {
    margin-top: 4px;
}

.stack {
    display: flex;
    flex-direction: column;
    flex: none;
    color: #ababab;
    font-size: 15.500px;
}

.stack.dark {
    color: #4a4a4a;
}

.tool {
    height: 30px;
    display: flex;
    align-items: center;
    gap: 4px;
    white-space: nowrap;
}

.tool svg {
    flex: none;
}

.caret {
    display: flex;
    justify-content: center;
    flex: none;
    width: 12px;
}

.caret::before {
    content: "";
    border-top: 4px solid #b0b0b0;
    border-left: 3.500px solid transparent;
    border-right: 3.500px solid transparent;
}

.caret.dk::before { border-top-color: #555; }
.caret.white::before { border-top-color: #fff; }
.caret.big-caret::before {
    border-top-width: 6px;
    border-left-width: 6px;
    border-right-width: 6px;
}

.w6 { width: 6px; }
.w12 { width: 12px; }
.w14 { width: 14px; }
.w16 { width: 16px; }
.w20 { width: 20px; }
.w22 { width: 22px; }

.tri.up {
    display: block;
    border-bottom: 6px solid #777;
    border-left: 6px solid transparent;
    border-right: 6px solid transparent;
}

.vsep {
    display: block;
    flex: none;
    width: 1px;
    background: #d2d3d2;
}

/* 字体 */

.font-row {
    display: flex;
    align-items: center;
    color: #b4b4b4;
}

.font-row.one {
    height: 30px;
    margin: 9px 0 10px 6.500px;
}

.font-row.two {
    height: 30px;
    padding-left: 5.500px;
}

.combo {
    height: 30px;
    display: flex;
    align-items: center;
    justify-content: flex-end;
    background: #fff;
    border: 1px solid #d0d1d0;
}

.combo .caret {
    height: 28px;
    width: 17px;
    align-items: center;
    background: #e6e7e6;
}

.c-name { width: 122px; }

.c-size {
    width: 65px;
    margin-left: 1px;
    justify-content: space-between;
    padding-left: 4px;
    font-size: 16px;
    color: #aaa;
}

.fx {
    text-align: center;
    font: 20px "Liberation Sans", sans-serif;
    position: relative;
}

.fx.w32 { width: 32px; }
.fx.w24 { width: 24px; }
.fx.w30 { width: 30px; }
.fx.small { font-size: 17px; }
.fx.mid { font-size: 24px; margin-left: 0; }

.fx sup {
    position: absolute;
    top: 1px;
    right: 3px;
    border-left: 3px solid transparent;
    border-right: 3px solid transparent;
}

.fx sup.up { border-bottom: 4px solid #aaa; }
.fx sup.down { border-top: 4px solid #8fb0dc; }

.s1 { height: 28px; margin: 0 0 0 8px; }
.s2 { height: 28px; margin: 0 4px 0 10px; }
.s3 { height: 28px; margin: 0 5px; }
.s4 { height: 28px; margin: 0 5.500px; }
.s5 { height: 28px; margin: 0 4.500px; }

.fmt {
    width: 29px;
    flex: none;
    text-align: center;
    font: 18px "Liberation Sans", sans-serif;
    color: #b4b4b4;
}

.fmt.ital { font-family: "Liberation Serif", serif; font-style: italic; font-size: 20px; }
.fmt.shadow { font-weight: 700; text-shadow: 1px 1px 1px #ccc; }
.fmt.tiny { font-size: 14px; }
.fmt.av { font-size: 14px; line-height: 14px; border-bottom: 2px solid #ccc; width: 19px; margin: 0 5px; }
.fmt.aa { width: 30px; font-size: 17px; }

/* 段落 */

.para-left {
    width: 222px;
    flex: none;
    padding: 11px 0 0 6px;
}

.para-row {
    display: flex;
    align-items: center;
    height: 24px;
}

.para-row.one {
    padding-left: 2px;
}

.para-row.two {
    margin-top: 19px;
    margin-left: -1px;
}

.para-row svg {
    flex: none;
}

/* 形状库 */

.gallery {
    width: 179px;
    height: 81px;
    margin: 5px 0 0 8px;
    display: flex;
    flex: none;
    border: 1px solid #b3b4b3;
    background: #fff;
}

.shapes {
    width: 160px;
    display: grid;
    grid-template-columns: repeat(6, 26px);
    grid-auto-rows: 26.500px;
    flex: none;
}

.shapes svg {
    width: 26px;
    height: 26px;
    fill: none;
    stroke: #666;
    stroke-width: 1.100;
}

.gal-scroll {
    flex: 1;
    display: flex;
    flex-direction: column;
    background: #f1f2f1;
    border-left: 1px solid #c9c9c9;
}

.gal-scroll span {
    flex: 1;
    display: flex;
    align-items: center;
    justify-content: center;
    border-bottom: 1px solid #c9c9c9;
}

.gal-scroll span.off { background: #e0e1e0; }
.gal-scroll span .tri.up { border-bottom: 4px solid #bbb; border-left-width: 4px; border-right-width: 4px; }
.gal-scroll span.more { border-bottom: 0; border-top: 1px solid #888; }

.g-edit .stack {
    margin-left: 8px;
}

.ribbon-end {
    flex: 1;
    display: flex;
    justify-content: flex-end;
    align-items: flex-end;
    padding: 0 12px 3px 0;
    height: 111px;
}

/* 主区域 */

.main {
    height: 741px;
    display: flex;
    background: #e6e7e6;
}

.pane {
    width: 189px;
    flex: none;
    overflow: hidden;
}

.thumbs {
    display: flex;
    flex-direction: column;
    gap: 23.850px;
    margin-top: -14px;
}

.trow {
    display: flex;
    height: 72px;
    flex: none;
}

.num {
    width: 38px;
    flex: none;
    padding-left: 6px;
    margin-top: -9px;
    font-size: 22px;
    line-height: 26px;
    color: #5a5a5a;
}

.thumb {
    width: 123px;
    height: 72px;
    flex: none;
    background: #fff;
    border: 1px solid #ccc;
    filter: blur(.5px);
}

.thumb g {
    stroke-dasharray: 4 .6 2 .8 6 .5;
}

.current .num {
    color: #dc6a38;
}

.current .thumb {
    border: 0;
    outline: 4px solid #f2804f;
}

.pane-scroll {
    width: 20px;
    flex: none;
    display: flex;
    flex-direction: column;
    justify-content: space-between;
    padding-top: 4px;
    margin-right: 6px;
    background: #dfe0df;
    position: relative;
}

.sb-btn {
    height: 19px;
    width: 19px;
    flex: none;
    display: flex;
    align-items: center;
    justify-content: center;
    background: #fff;
    border: 1px solid #bdbdbd;
}

.sb-btn.end {
    margin-bottom: 3px;
}

.pane-scroll .sb-thumb {
    position: absolute;
    top: 335px;
    left: 0;
    width: 19px;
    height: 85px;
    background: #fff;
    border: 1px solid #bdbdbd;
}

.editor {
    flex: 1;
    min-width: 0;
    padding: 17px 0 0 155px;
    border-left: 1px solid #f3f3f3;
}

.slide {
    position: relative;
    width: 1247px;
    height: 701px;
    background: #fff;
    box-shadow: 0 0 0 1px #d4d4d4;
    color: #222;
}

.slide-head {
    height: 56px;
    display: flex;
    align-items: center;
    padding: 0 26px 0 7px;
}

.slide-head h1 {
    margin: -4px 0 0 27px;
    font-size: 34px;
    font-weight: 700;
    letter-spacing: .8px;
    word-spacing: 3px;
    color: #111;
    white-space: nowrap;
}

.brand {
    margin-left: auto;
    display: flex;
    align-items: center;
    gap: 4px;
    font-size: 32px;
    line-height: 36px;
    font-weight: 700;
    color: #0f7a68;
}

.slide-rule {
    height: 6px;
    background: #0b6e60;
    border-top: 1px solid #a8dcd4;
    border-bottom: 1px solid #a8dcd4;
}

.slide-body {
    padding: 59.500px 0 0 78px;
    font-family: "Liberation Mono", "Noto Sans CJK SC", monospace;
    font-size: 31px;
    line-height: 37.400px;
    color: #3a3a3a;
    white-space: nowrap;
    font-weight: 300;
}

.slide-body h2 {
    font-size: 30px;
    font-weight: 700;
    line-height: 37px;
    color: #222;
}

.h-first {
    margin-bottom: 8px;
}

.h-second {
    margin-top: 52px;
    margin-bottom: 11px;
}

.slide-body ul {
    list-style: none;
}

.slide-body li {
    display: flex;
}

.dot {
    width: 39px;
    flex: none;
    color: #1f3fd0;
}

.slide-body em {
    font-style: normal;
    color: #2a44d6;
}

.watermark {
    position: absolute;
    right: 35px;
    bottom: 15px;
    font-size: 27px;
    line-height: 34px;
    font-style: italic;
    font-weight: 700;
    color: #e4e4e4;
}

.pointer {
    position: absolute;
    left: 760px;
    top: 65px;
    width: 63px;
    height: 64px;
    border-radius: 50%;
    background: #fff000;
    padding: 33px 0 0 33px;
}

.edit-scroll {
    width: 21px;
    flex: none;
    position: relative;
    background: #dfe0df;
    display: flex;
    flex-direction: column;
    align-items: center;
    padding-top: 7px;
}

.edit-scroll .sb-btn {
    height: 15px;
    width: 19px;
}

.sb-thumb2 {
    width: 19px;
    height: 20px;
    margin: 337px 0 270px;
    background: #fff;
    border: 1px solid #bdbdbd;
}

.nav-a { margin-top: 10px; }
.nav-b { margin-top: 13px; }

/* 状态栏 */

.status {
    position: relative;
    height: 29px;
    display: flex;
    align-items: center;
    padding-bottom: 1px;
    background: #f0f1f0;
    border-top: 1px solid #d2d3d2;
    color: #666;
    font-size: 15.500px;
}

.arc {
    position: absolute;
    left: 20px;
    bottom: -8px;
    width: 33px;
    height: 12px;
    border-radius: 50% 50% 0 0;
    background: #5a7fb0;
    border: 1px solid #9db7d6;
    clip-path: inset(0 0 8px 0);
}

.st-count {
    width: 226px;
    padding-left: 10px;
    flex: none;
    white-space: nowrap;
    word-spacing: 2px;
}

.st-lang {
    margin-left: 22px;
}

.st-right {
    margin-left: auto;
    display: flex;
    align-items: center;
    height: 100%;
    padding-right: 9px;
}

.st-txt {
    margin-left: 6px;
    white-space: nowrap;
}

.i-comment { margin-left: 26px; }
.i-comment + .st-txt { margin-left: 4px; }

.st-view {
    width: 50px;
    height: 28px;
    margin-left: 25px;
    display: flex;
    align-items: center;
    justify-content: center;
    background: #c8c9c8;
}

.ime {
    width: 194px;
    height: 29px;
    margin-left: 12px;
    margin-top: 2px;
    display: flex;
    align-items: center;
    justify-content: space-between;
    padding: 0 10px 0 3px;
    background: #fff;
    border: 1px solid #d5dde6;
    color: #2f7fc9;
    font-size: 19px;
}

.zoom-slider {
    position: relative;
    width: 93px;
    height: 1px;
    background: #9a9a9a;
}

.zoom-slider i {
    position: absolute;
    left: 26px;
    top: -9px;
    width: 4px;
    height: 19px;
    background: #6a6a6a;
}

.zoom-plus {
    width: 22px;
    text-align: center;
    font: 700 20px "Liberation Sans", sans-serif;
}

.zoom-val {
    margin-left: 15px;
}

.i-fit { margin-left: 19px; }
```
